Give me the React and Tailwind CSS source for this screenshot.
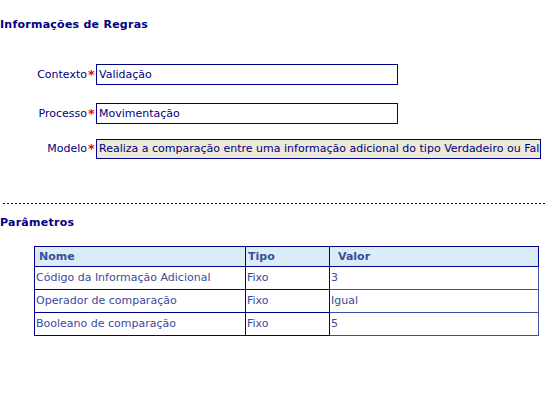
const rows = [
  { nome: "Código da Informação Adicional", tipo: "Fixo", valor: "3" },
  { nome: "Operador de comparação", tipo: "Fixo", valor: "Igual" },
  { nome: "Booleano de comparação", tipo: "Fixo", valor: "5" },
];

const Field = ({ label, value, className }) => (
  <div className="flex items-center">
    <span className="w-[87px] text-right">{label}</span>
    <span className="w-[9px] text-center text-[13px] font-bold text-[#ff0000]">*</span>
    <div className={`flex items-center border border-[#00008b] pl-[2px] overflow-hidden whitespace-nowrap ${className}`}>
      {value}
    </div>
  </div>
);

export default function App() {
  return (
    <div className="w-[546px] h-[400px] bg-white text-[11px] leading-[14px] text-[#000080] font-['DejaVu_Sans',Verdana,sans-serif] overflow-hidden">
      {/* Header */}
      <h1 className="mt-[18px] font-bold text-[11px] leading-[14px] tracking-[0.25px]">Informações de Regras</h1>

      {/* Form */}
      <div className="mt-[32px] flex flex-col">
        <Field label="Contexto" value="Validação" className="w-[302px] h-[21px] bg-white" />
        <div className="mt-[18px]">
          <Field label="Processo" value="Movimentação" className="w-[302px] h-[21px] bg-white" />
        </div>
        <div className="mt-[15px]">
          <Field
            label="Modelo"
            value="Realiza a comparação entre uma informação adicional do tipo Verdadeiro ou Falso"
            className="w-[445px] h-[20px] bg-[#ece9d8]"
          />
        </div>
      </div>

      {/* Divider */}
      <div className="mt-[44px] ml-[3px] h-px bg-[repeating-linear-gradient(to_right,#00008b_0_2px,transparent_2px_4px)]" />

      {/* Parâmetros */}
      <h2 className="mt-[12px] font-bold text-[11px] leading-[14px] tracking-[0.25px]">Parâmetros</h2>

      <table className="mt-[16px] ml-[34px] w-[505px] border-collapse text-[11px] leading-[14px]">
        <thead>
          <tr className="h-[20px] bg-[#daecf5] text-[#3b4c9c] font-bold">
            <th className="w-[211px] border border-[#00008b] text-left p-0 pl-[4px]">Nome</th>
            <th className="w-[84px] border border-[#00008b] text-left p-0 pl-[2px]">Tipo</th>
            <th className="border border-[#00008b] text-left p-0 pl-[8px]">Valor</th>
          </tr>
        </thead>
        <tbody className="text-[#3a4a9a]">
          {rows.map((r, i) => (
            <tr key={i} className="h-[23px]">
              <td className="border border-[#00008b] p-0 pl-[1px]">{r.nome}</td>
              <td className="border border-[#00008b] p-0 pl-[1px]">{r.tipo}</td>
              <td className="border border-[#3f50a0] p-0 pl-[1px]">{r.valor}</td>
            </tr>
          ))}
        </tbody>
      </table>
    </div>
  );
}
